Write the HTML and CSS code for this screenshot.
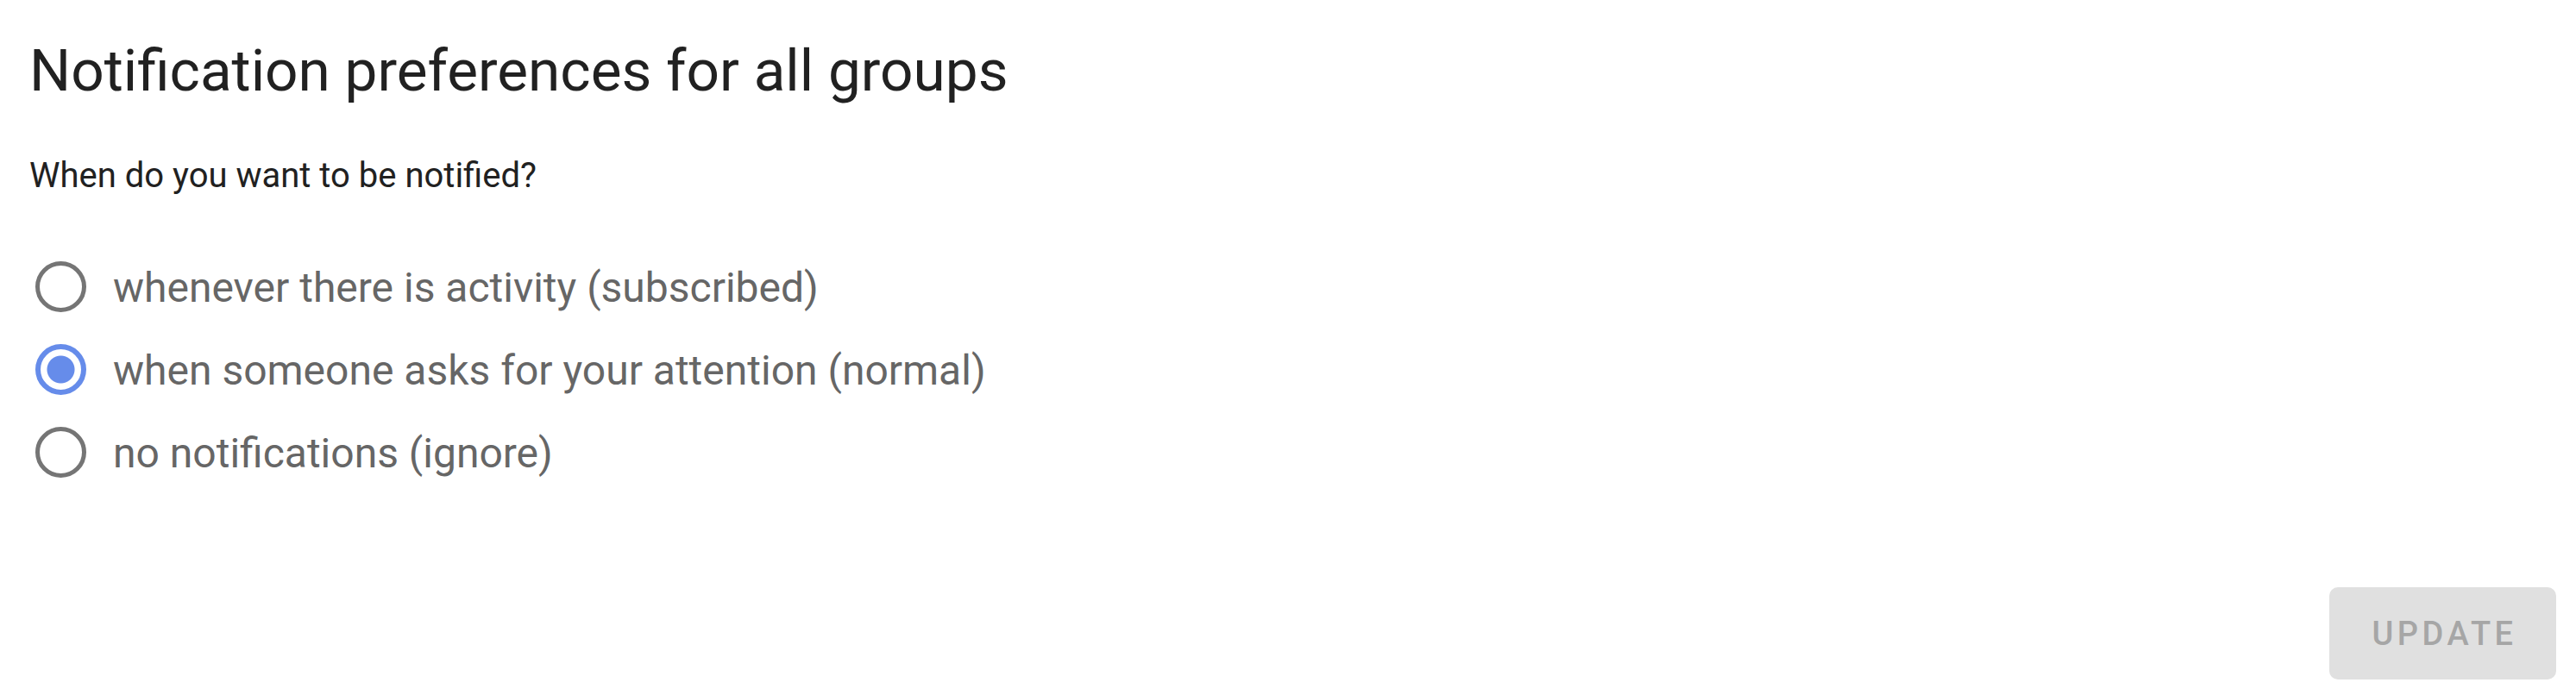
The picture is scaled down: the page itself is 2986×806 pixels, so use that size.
FILE: index.html
```html
<!DOCTYPE html>
<html lang="en">
<head>
<meta charset="utf-8">
<title>Notification preferences</title>
<link rel="stylesheet" href="styles.css">
</head>
<body>
<main class="page">
  <h1 class="title">Notification preferences for all groups</h1>
  <p class="question">When do you want to be notified?</p>
  <form class="options">
    <label class="option">
      <input class="radio" type="radio" name="level" value="subscribed">
      <span class="option-text">whenever there is activity (subscribed)</span>
    </label>
    <label class="option">
      <input class="radio" type="radio" name="level" value="normal" checked>
      <span class="option-text">when someone asks for your attention (normal)</span>
    </label>
    <label class="option">
      <input class="radio" type="radio" name="level" value="ignore">
      <span class="option-text">no notifications (ignore)</span>
    </label>
  </form>
  <div class="actions">
    <button class="update" type="button" disabled>Update</button>
  </div>
</main>
</body>
</html>
```
FILE: styles.css
```css
html, body {
  margin: 0;
  padding: 0;
  background: #ffffff;
}

body {
  font-family: Roboto, "Noto Sans", "Liberation Sans", sans-serif;
}

.page {
  box-sizing: border-box;
  height: 806px;
  padding: 42px 23px 18px 34px;
  display: flex;
  flex-direction: column;
}

.title {
  margin: 0;
  font-size: 67.5px;
  font-weight: 400;
  line-height: 80px;
  color: #212121;
}

.question {
  margin: 58px 0 0;
  font-size: 40px;
  line-height: 48px;
  color: #212121;
}

.options {
  margin-top: 56px;
  display: flex;
  flex-direction: column;
}

.option {
  height: 96px;
  display: flex;
  align-items: center;
  cursor: pointer;
}

.radio {
  appearance: none;
  -webkit-appearance: none;
  box-sizing: border-box;
  width: 59px;
  height: 59px;
  margin: 0 31px 0 7px;
  border: 5px solid #757575;
  border-radius: 50%;
  background: #ffffff;
  flex: none;
}

.radio:checked {
  border: 6px solid #668cea;
  background: radial-gradient(circle, #668cea 0 15.5px, #ffffff 16.5px);
}

.option-text {
  align-self: stretch;
  box-sizing: border-box;
  padding-top: 3px;
  font-size: 48px;
  line-height: 93px;
  color: #666666;
}

.actions {
  margin-top: auto;
  display: flex;
  justify-content: flex-end;
}

.update {
  box-sizing: border-box;
  width: 263px;
  height: 107px;
  border: none;
  border-radius: 10px;
  background: #e0e0e0;
  color: #a6a6a6;
  font-family: Roboto, "Noto Sans", "Liberation Sans", sans-serif;
  font-size: 38px;
  font-weight: 500;
  letter-spacing: 4.5px;
  text-transform: uppercase;
  padding: 0 0 0 4px;
}
```
